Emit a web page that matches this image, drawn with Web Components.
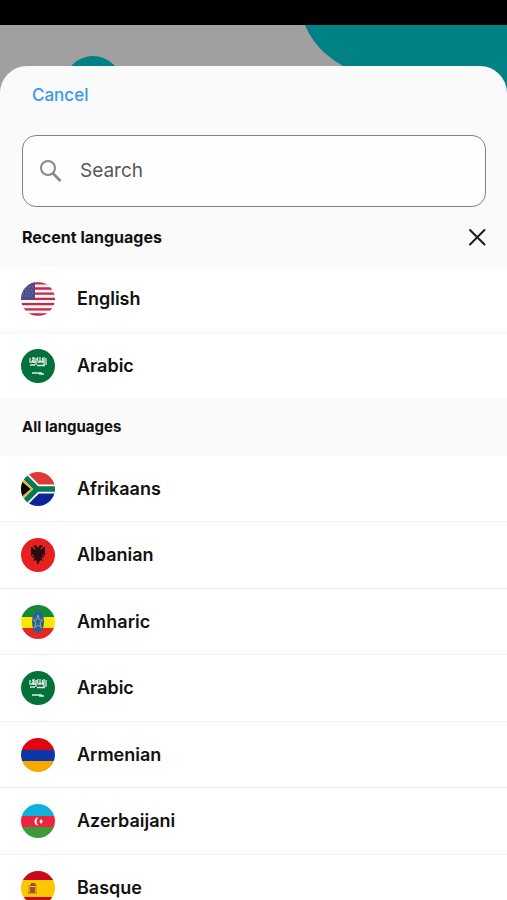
<!DOCTYPE html>
<html lang="en">
<head>
<meta charset="utf-8">
<meta name="viewport" content="width=device-width, initial-scale=1">
<title>Choose a language</title>
<style>
  body { margin: 0; font-family: Inter, "Liberation Sans", sans-serif; color: #111; }
</style>
</head>
<body>
<language-screen>
  <bottom-sheet>
    <search-field></search-field>
    <section-title clearable>Recent languages</section-title>
    <language-list spaced>
      <language-row flag="us">English</language-row>
      <language-row flag="sa">Arabic</language-row>
    </language-list>
    <section-title>All languages</section-title>
    <language-list>
      <language-row flag="za">Afrikaans</language-row>
      <language-row flag="al">Albanian</language-row>
      <language-row flag="et">Amharic</language-row>
      <language-row flag="sa">Arabic</language-row>
      <language-row flag="am">Armenian</language-row>
      <language-row flag="az">Azerbaijani</language-row>
      <language-row flag="es">Basque</language-row>
    </language-list>
  </bottom-sheet>
</language-screen>

<script>
const define = (name, html, setup) => {
  const template = document.createElement('template');
  template.innerHTML = html;
  customElements.define(name, class extends HTMLElement {
    constructor() {
      super();
      this.attachShadow({ mode: 'open' }).append(template.content.cloneNode(true));
    }
    connectedCallback() { if (setup) setup(this, this.shadowRoot); }
  });
};

const reset = `button { font: inherit; color: inherit; background: none; border: 0; margin: 0; padding: 0; cursor: pointer; }`;

define('language-screen', `
  <style>
    :host { display: flex; flex-direction: column; height: 100vh; overflow: hidden; position: relative; background: #a0a0a0; }
    .status { flex: none; height: 25px; background: #000; }
    .peek { flex: none; height: 41px; }
    .art { position: absolute; top: 25px; }
    .blob { right: 0; }
    .dot { left: 0; }
    ::slotted(bottom-sheet) { position: relative; }
  </style>
  <svg class="art dot" width="130" height="100" aria-hidden="true"><circle cx="93" cy="60" r="29" fill="#008285"/></svg>
  <svg class="art blob" width="202" height="100" aria-hidden="true"><path d="M0 0C7 17 19 30 38 41C80 72 150 84 202 72V0Z" fill="#008285"/></svg>
  <div class="status"></div>
  <div class="peek"></div>
  <slot></slot>`);

define('bottom-sheet', `
  <style>
    ${reset}
    :host { display: flex; flex-direction: column; flex: 1; min-height: 0; background: #fafafa; border-radius: 27px 27px 0 0; overflow: hidden; }
    header { flex: none; display: flex; align-items: center; height: 58px; padding: 0 32px; }
    header button { color: #3899e6; font-size: 17px; font-weight: 500; line-height: 24px; }
    main { flex: 1; min-height: 0; padding-top: 11px; overflow-y: auto; scrollbar-width: none; }
  </style>
  <header><button type="button">Cancel</button></header>
  <main><slot></slot></main>`);

define('search-field', `
  <style>
    :host { display: block; padding: 0 21px 0 22px; }
    label { display: flex; align-items: center; gap: 16px; height: 72px; padding: 0 16px; box-sizing: border-box; border: 1px solid #808080; border-radius: 14px; background: #fefefe; }
    svg { flex: none; }
    input { flex: 1; min-width: 0; padding: 0; border: 0; outline: 0; background: none; font: 400 19px/24px Inter, "Liberation Sans", sans-serif; color: #111; }
    input::placeholder { color: #585858; opacity: 1; }
  </style>
  <label>
    <svg width="25" height="26" viewBox="0 0 25 26" fill="none" stroke="#888" stroke-width="2" aria-hidden="true"><circle cx="9" cy="10" r="7"/><path d="M14 15.500l7.500 7.500" stroke-width="2.600"/></svg>
    <input type="text" placeholder="Search" aria-label="Search">
  </label>`);

define('section-title', `
  <style>
    ${reset}
    :host { display: flex; align-items: center; justify-content: space-between; height: 58px; padding: 0 21px 0 22px; }
    :host([clearable]) { height: 60px; }
    h2 { margin: 0; font-size: 15px; line-height: 20px; font-weight: 700; }
    :host([clearable]) h2 { font-size: 16px; }
    button { display: none; }
    :host([clearable]) button { display: block; }
    svg { display: block; }
  </style>
  <h2><slot></slot></h2>
  <button type="button" aria-label="Clear recent languages">
    <svg width="18" height="18" viewBox="0 0 18 18" fill="none" stroke="#1a1a1a" stroke-width="2" stroke-linecap="round" aria-hidden="true"><path d="M2 2l14.500 14.500M16.500 2L2 16.500"/></svg>
  </button>`);

define('language-list', `
  <style>
    :host { display: grid; grid-auto-rows: 66px 67px; --line: 1px solid #eee; }
    :host([spaced]) { grid-auto-rows: 64px; row-gap: 3px; --line: 0; }
  </style>
  <slot></slot>`, host => host.setAttribute('role', 'list'));

const flags = {
  us: `<rect width="34" height="34" fill="#f8f2f4"/>
    <path d="M0 1.300h34M0 6.500h34M0 11.700h34M0 16.900h34M0 22.100h34M0 27.300h34M0 32.500h34" stroke="#c12b48" stroke-width="2.300"/>
    <rect width="14" height="18" fill="#4c4f86"/>
    <path d="M2 5h11M1 8h12M2 11h11M1 14h12" stroke="#8086b0" stroke-width="1" stroke-dasharray="1 2"/>`,
  sa: `<rect width="34" height="34" fill="#04713a"/>
    <g fill="none" stroke="#dcebe2" stroke-width="1.300">
      <path d="M9 9v5M11 9c2 0 2 2 0 3M9 16h5M13 8v6M15 9v7M17 8c-2 3 1 3 0 6M19 8v6M21 9c2 1-1 3 1 5M23 8v8M25 9v7M16 16.500h8M10 13h5M18 12.500h5"/>
      <path d="M11 24h10M18 25h5"/>
    </g>`,
  za: `<rect width="34" height="17" fill="#de3a35"/><rect y="17" width="34" height="17" fill="#0c2499"/>
    <path d="M-1 0L16 17H35M-1 34L16 17" fill="none" stroke="#fff" stroke-width="9"/>
    <path d="M-6 3L11 17L-6 31Z" fill="#f2b634"/>
    <path d="M-1 0L16 17H35M-1 34L16 17" fill="none" stroke="#087a51" stroke-width="5.500"/>
    <path d="M-3 3L12 17L-3 31Z" fill="#f2b634"/><path d="M-3 6L9.500 17L-3 28Z" fill="#080808"/>`,
  al: `<rect width="34" height="34" fill="#e5201f"/>
    <path d="M17 10L15 7L12 8L14 10L15 12L13 11L11 9L10 9V18L13 16L11 20L14 19L12 23L15 22L17 27L19 22L22 23L20 19L23 20L21 16L24 18V9L23 9L21 11L19 12L20 10L22 8L19 7Z" fill="#280b0d"/>`,
  et: `<rect width="34" height="12" fill="#148a37"/><rect y="12" width="34" height="11" fill="#fce600"/><rect y="23" width="34" height="11" fill="#e32a20"/>
    <ellipse cx="17" cy="17" rx="6" ry="11" fill="#235fa8"/>
    <path d="M17 10L18.500 15H21.500L19 18L20.500 23L17 20L13.500 23L15 18L12.500 15H15.500Z" fill="none" stroke="#a9b060" stroke-width="1"/>`,
  am: `<rect width="34" height="12" fill="#df0612"/><rect y="12" width="34" height="11" fill="#0b37a8"/><rect y="23" width="34" height="11" fill="#f5a800"/>`,
  az: `<rect width="34" height="12" fill="#0fb2dc"/><rect y="12" width="34" height="11" fill="#ee243e"/><rect y="23" width="34" height="11" fill="#3c9a37"/>
    <path d="M17.500 13.500A4 4 0 1 0 17.500 21.500A5 5 0 0 1 17.500 13.500Z" fill="#fff"/><path d="M20 15L21 16.500L22 17.500L21 18.500L20 20L19 18.500L18.500 17.500L19 16.500Z" fill="#fff"/>`,
  es: `<rect width="34" height="34" fill="#fdc700"/><rect width="34" height="9" fill="#c9071e"/><rect y="26" width="34" height="8" fill="#c9071e"/>
    <path d="M8 14v8M15 14v8" stroke="#a98054" stroke-width="1"/><path d="M9 16h5v4c0 3-5 3-5 0Z" fill="#b4442f"/><path d="M9 15l1-3h4l1 3Z" fill="#8b5530"/><path d="M7 22h9" stroke="#92602e"/>`
};

define('country-flag', `
  <style>
    :host { display: block; flex: none; width: 34px; height: 34px; border-radius: 50%; overflow: hidden; }
    svg { display: block; }
  </style>
  <svg width="34" height="34" viewBox="0 0 34 34" aria-hidden="true"></svg>`,
  (host, root) => { root.querySelector('svg').innerHTML = flags[host.getAttribute('country')] || ''; });

define('language-row', `
  <style>
    ${reset}
    :host { display: flex; background: #fff; border-bottom: var(--line); }
    button { flex: 1; display: flex; align-items: center; gap: 22px; padding: 0 21px; text-align: left; font-size: 18px; line-height: 24px; font-weight: 600; }
  </style>
  <button type="button"><span><slot></slot></span></button>`,
  (host, root) => {
    host.setAttribute('role', 'listitem');
    const flag = document.createElement('country-flag');
    flag.setAttribute('country', host.getAttribute('flag'));
    root.querySelector('button').prepend(flag);
  });
</script>
</body>
</html>
